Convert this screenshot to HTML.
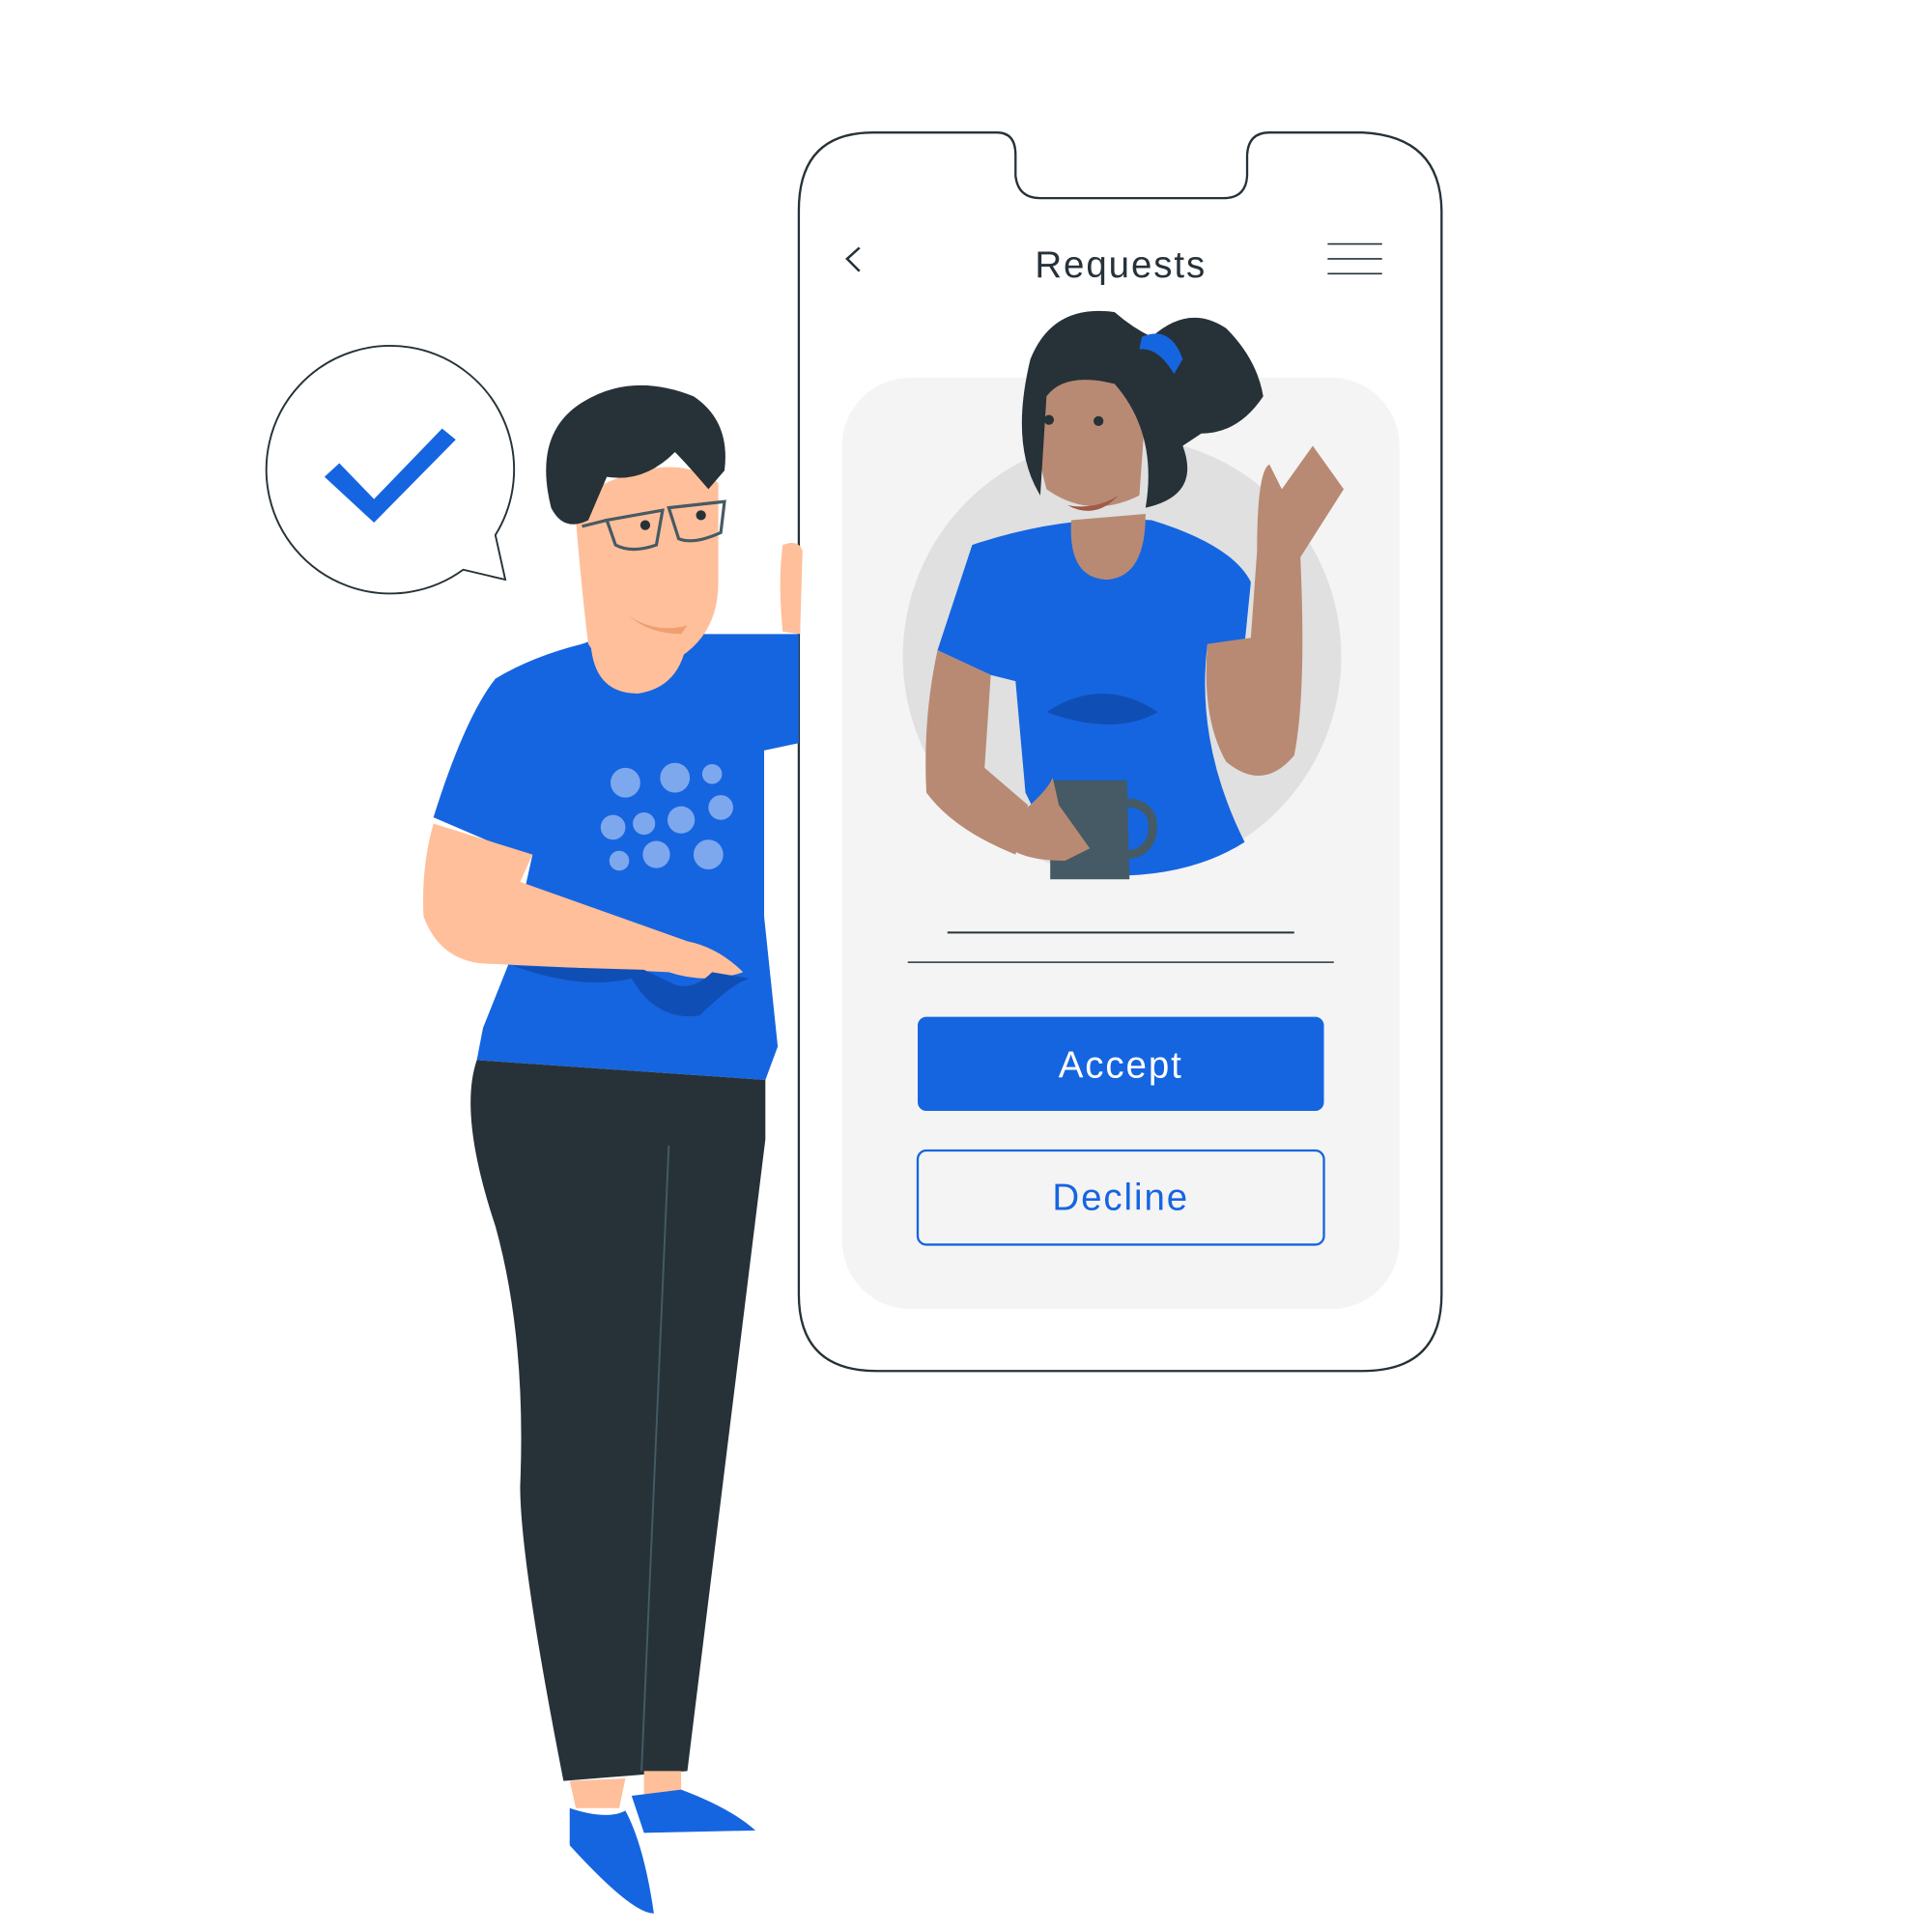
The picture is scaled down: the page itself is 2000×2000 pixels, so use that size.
<!DOCTYPE html>
<html><head><style>html,body{margin:0;padding:0;background:#fff}svg{display:block}</style></head>
<body>
<svg width="2000" height="2000" viewBox="0 0 1560 1560" xmlns="http://www.w3.org/2000/svg">
<rect width="1560" height="1560" fill="#fff"/>
<path d="M400 432 A100 100 0 1 0 374 460 L408 468 Z" fill="#fff" stroke="#263238" stroke-width="1.5"/>
<path d="M262 385 L302 422 L368 355 L357 346 L302 403 L274 374 Z" fill="#1565e0"/>
<path d="M705 107 L805 107 Q820 107 820 125 L820 142 Q822 160 840 160 L988 160 Q1006 160 1007 142 L1007 125 Q1008 107 1025 107 L1100 107 Q1163 110 1164 170 L1164 1045 Q1164 1107 1100 1107 L708 1107 Q645 1107 645 1045 L645 170 Q645 107 705 107 Z" fill="#fff" stroke="#263238" stroke-width="1.8"/>
<path d="M694 200 L684 209 L694 219" fill="none" stroke="#263238" stroke-width="2"/>
<text x="905" y="224" text-anchor="middle" font-family="Liberation Sans, sans-serif" font-size="30" letter-spacing="1.5" fill="#263238">Requests</text>
<g stroke="#263238" stroke-width="1.3"><line x1="1072" y1="197" x2="1116" y2="197"/><line x1="1072" y1="209" x2="1116" y2="209"/><line x1="1072" y1="221" x2="1116" y2="221"/></g>
<rect x="680" y="305" width="450" height="752" rx="55" fill="#f4f4f4"/>
<circle cx="906" cy="530" r="177" fill="#e0e0e0"/>
<path d="M785 440 Q860 415 930 420 Q995 440 1010 470 L1005 520 L975 520 Q965 600 1005 680 Q950 715 860 705 L828 640 L820 550 L800 545 L757 525 Z" fill="#1565e0"/>
<path d="M845 575 Q890 545 935 575 Q900 595 845 575 Z" fill="#0f4fb5"/>
<path d="M757 525 L800 545 L795 620 L830 650 L820 690 Q770 670 748 640 Q745 580 757 525 Z" fill="#b88a74"/>
<path d="M975 520 L1010 515 L1015 445 Q1015 380 1025 375 L1035 395 L1060 360 L1085 395 L1050 450 Q1055 560 1045 610 Q1020 640 990 615 Q970 580 975 520 Z" fill="#b88a74"/>
<path d="M865 420 L925 415 Q925 465 895 468 Q862 468 865 420 Z" fill="#b88a74"/>
<path d="M840 290 Q890 275 925 330 L920 400 Q880 420 845 395 Q830 340 840 290 Z" fill="#b88a74"/>
<path d="M832 290 Q850 245 900 252 Q915 265 930 272 Q960 245 990 265 Q1015 290 1020 320 Q1000 350 970 350 L955 360 Q970 400 925 410 Q935 350 900 310 Q860 300 845 320 L840 400 Q815 360 832 290 Z" fill="#263238"/>
<path d="M922 272 Q945 262 955 290 L948 302 Q935 280 920 282 Z" fill="#1565e0"/>
<path d="M862 408 Q885 412 903 400 Q885 420 862 408" fill="#a05a45"/>
<circle cx="847" cy="339" r="4" fill="#263238"/><circle cx="887" cy="340" r="4" fill="#263238"/>
<path d="M848 630 L910 630 L912 710 L848 710 Z" fill="#455a64"/>
<path d="M910 648 Q935 650 930 675 Q925 690 910 690" fill="none" stroke="#455a64" stroke-width="7"/>
<path d="M820 660 Q845 640 850 628 L855 650 L880 685 L860 695 Q830 695 815 685 Z" fill="#b88a74"/>
<line x1="765" y1="753" x2="1045" y2="753" stroke="#263238" stroke-width="1.5"/>
<line x1="733" y1="777" x2="1077" y2="777" stroke="#263238" stroke-width="1.2"/>
<rect x="741" y="821" width="328" height="76" rx="7" fill="#1565e0"/>
<text x="905" y="870" text-anchor="middle" font-family="Liberation Sans, sans-serif" font-size="30" letter-spacing="1.5" fill="#fff">Accept</text>
<rect x="741" y="929" width="328" height="76" rx="7" fill="#f4f4f4" stroke="#1565e0" stroke-width="1.8"/>
<text x="905" y="977" text-anchor="middle" font-family="Liberation Sans, sans-serif" font-size="30" letter-spacing="1.5" fill="#1565e0">Decline</text>
<path d="M632 440 Q645 435 648 445 L646 512 L632 510 Q628 470 632 440 Z" fill="#ffbf9a"/>
<path d="M470 520 Q510 505 560 512 L645 512 L645 600 L617 606 L617 740 L628 845 L618 872 L385 856 L390 830 L410 780 L430 690 L420 690 L350 660 Q375 580 400 548 Q430 530 470 520 Z" fill="#1565e0"/>
<path d="M477 520 Q480 560 515 560 Q550 555 555 515 Z" fill="#ffbf9a"/>
<path d="M465 420 Q470 480 475 520 Q500 560 550 530 Q580 510 580 470 L580 390 Q540 360 470 400 Z" fill="#ffbf9a"/>
<path d="M507 497 Q530 512 555 505 L550 512 Q525 512 507 497 Z" fill="#f0a070"/>
<path d="M445 410 Q430 350 470 325 Q510 300 560 320 Q590 340 585 380 L572 395 Q555 375 545 365 Q520 390 490 385 L475 420 Q455 430 445 410 Z" fill="#263238"/>
<g fill="none" stroke="#455a64" stroke-width="2.5"><path d="M490 420 L535 412 L530 440 Q510 447 497 440 Z"/><path d="M540 410 L585 405 L582 430 Q560 440 548 435 Z"/><path d="M470 425 L490 420"/></g>
<circle cx="521" cy="424" r="4" fill="#263238"/><circle cx="566" cy="416" r="4" fill="#263238"/>
<g fill="#8ab0f0" opacity="0.9"><circle cx="505" cy="632" r="12"/><circle cx="545" cy="628" r="12"/><circle cx="575" cy="625" r="8"/><circle cx="495" cy="668" r="10"/><circle cx="520" cy="665" r="9"/><circle cx="550" cy="662" r="11"/><circle cx="582" cy="652" r="10"/><circle cx="500" cy="695" r="8"/><circle cx="530" cy="690" r="11"/><circle cx="572" cy="690" r="12"/></g>
<path d="M350 665 Q340 700 342 740 Q355 775 390 778 L540 785 Q570 795 600 785 Q580 765 555 760 L420 712 L430 690 Z" fill="#ffbf9a"/>
<path d="M415 780 Q470 800 510 790 Q530 825 565 820 Q590 795 605 790 L575 785 Q560 800 545 795 L520 783 Z" fill="#0f4fb5"/>
<path d="M385 856 L618 872 L618 920 L555 1430 L455 1438 Q420 1260 420 1200 Q425 1080 400 990 Q370 900 385 856 Z" fill="#263238"/>
<line x1="540" y1="925" x2="518" y2="1430" stroke="#455a64" stroke-width="1.5"/>
<path d="M460 1438 L505 1436 L500 1460 L465 1460 Z" fill="#ffbf9a"/>
<path d="M520 1430 L550 1430 L550 1448 L520 1450 Z" fill="#ffbf9a"/>
<path d="M510 1450 L550 1445 Q590 1460 610 1478 L520 1480 Z" fill="#1565e0"/>
<path d="M460 1460 Q490 1470 505 1462 Q520 1490 528 1545 Q510 1545 460 1490 Z" fill="#1565e0"/>
</svg>
</body></html>
